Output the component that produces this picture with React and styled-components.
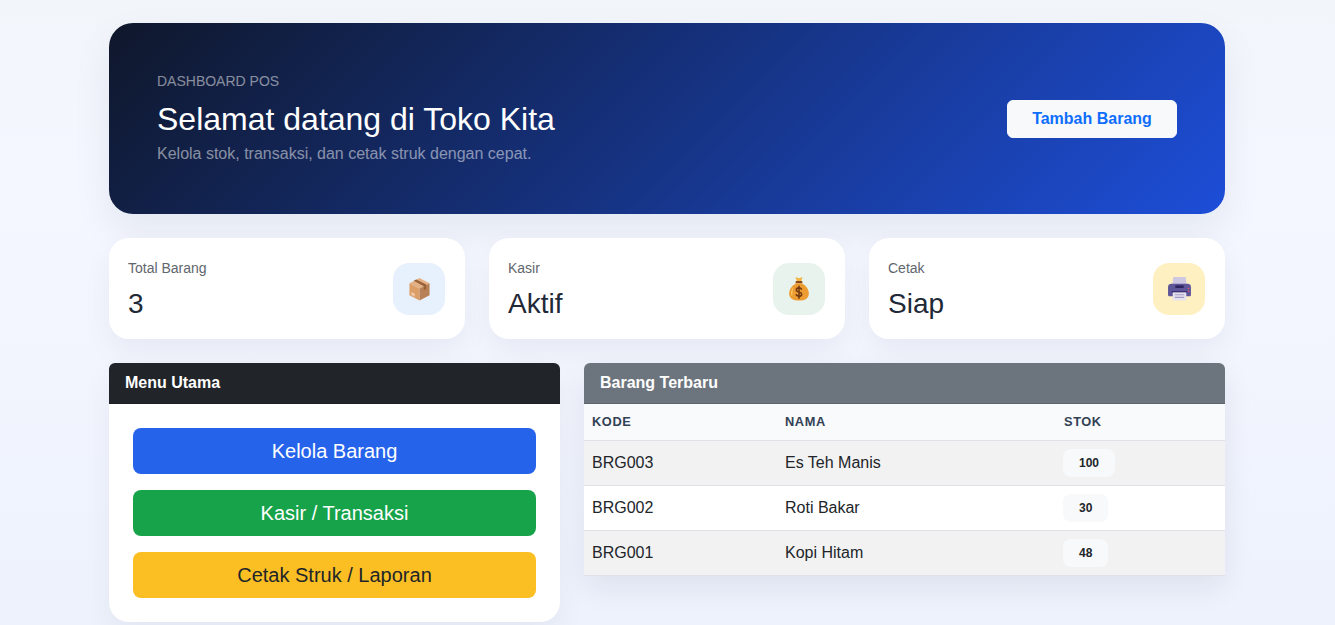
import styled, { createGlobalStyle } from "styled-components";

const GlobalStyle = createGlobalStyle`
  * { box-sizing: border-box; }
  html, body { margin: 0; padding: 0; }
  body {
    font-family: "Liberation Sans", Arial, sans-serif;
    font-size: 16px;
    line-height: 1.5;
    color: #212529;
    background: linear-gradient(180deg, #f2f5fa 0%, #f4f7ff 30%, #eef2fd 100%);
    min-height: 100vh;
  }
`;

const Page = styled.div`
  width: 1116px;
  margin-left: 109px;
  padding-top: 23px;
  display: flex;
  flex-direction: column;
  gap: 24px;
`;

const Hero = styled.section`
  height: 191px;
  padding: 0 48px;
  border-radius: 24px;
  background: linear-gradient(135deg, #0f172a 0%, #1d4ed8 100%);
  box-shadow: 0 16px 40px rgba(15, 23, 42, 0.07);
  display: flex;
  align-items: center;
  justify-content: space-between;
`;

const HeroText = styled.div`
  display: flex;
  flex-direction: column;
`;

const Eyebrow = styled.p`
  margin: 0 0 10px;
  font-size: 14px;
  line-height: 18px;
  color: rgba(255, 255, 255, 0.5);
  text-transform: uppercase;
`;

const Title = styled.h1`
  margin: 0 0 4px;
  font-size: 32px;
  font-weight: 400;
  line-height: 38px;
  color: #fff;
`;

const Subtitle = styled.p`
  margin: 0;
  font-size: 16px;
  line-height: 24px;
  color: rgba(255, 255, 255, 0.5);
`;

const AddButton = styled.button`
  width: 170px;
  height: 38px;
  border: 1px solid #f8f9fa;
  border-radius: 6px;
  background: #f8f9fa;
  color: #0d6efd;
  font: bold 16px "Liberation Sans", Arial, sans-serif;
`;

const StatGrid = styled.section`
  display: grid;
  grid-template-columns: repeat(3, 356px);
  gap: 24px;
`;

const StatCard = styled.div`
  height: 101px;
  padding: 3px 20px 0 19px;
  border-radius: 20px;
  background: #fff;
  box-shadow: 0 12px 30px rgba(15, 23, 42, 0.05);
  display: flex;
  align-items: center;
  justify-content: space-between;
`;

const StatLabel = styled.div`
  font-size: 14px;
  line-height: 18px;
  color: #5f666d;
`;

const StatValue = styled.div`
  font-size: 28px;
  line-height: 34px;
  color: #1f2937;
  margin-top: 10px;
`;

const StatIcon = styled.div`
  width: 52px;
  height: 52px;
  margin-top: -3px;
  border-radius: 16px;
  background: ${(p) => p.$bg};
  display: flex;
  align-items: center;
  justify-content: center;
`;

const Columns = styled.section`
  display: grid;
  grid-template-columns: 451px 641px;
  gap: 24px;
  align-items: start;
`;

const MenuCard = styled.div`
  border-radius: 6px 6px 20px 20px;
  background: #fff;
  box-shadow: 0 12px 30px rgba(15, 23, 42, 0.05);
`;

const ListCard = styled.div`
  border-radius: 6px 6px 0 0;
  background: #fff;
  box-shadow: 0 12px 30px rgba(15, 23, 42, 0.08);
`;

const CardHeader = styled.h2`
  margin: 0;
  height: 41px;
  padding: 0 16px;
  border-radius: 6px 6px 0 0;
  border-bottom: 1px solid rgba(0, 0, 0, 0.13);
  background: ${(p) => p.$bg};
  color: #fff;
  font-size: 16px;
  font-weight: bold;
  line-height: 40px;
`;

const MenuBody = styled.div`
  padding: 24px;
  display: flex;
  flex-direction: column;
  gap: 16px;
`;

const MenuButton = styled.button`
  height: 46px;
  border: 0;
  border-radius: 8px;
  background: ${(p) => p.$bg};
  color: ${(p) => p.$fg};
  font: 20px "Liberation Sans", Arial, sans-serif;
`;

const Table = styled.table`
  width: 100%;
  border-collapse: collapse;
  table-layout: fixed;
`;

const HeadCell = styled.th`
  width: ${(p) => p.$w};
  height: 36px;
  padding: 0 8px;
  background: #f8fafc;
  border-bottom: 1px solid #dee2e6;
  color: #334155;
  font-size: 12.8px;
  font-weight: bold;
  letter-spacing: 0.6px;
  text-align: left;
  text-transform: uppercase;
`;

const Row = styled.tr`
  background: ${(p) => (p.$striped ? "#f2f2f2" : "#fff")};
`;

const Cell = styled.td`
  height: 45px;
  padding: 0 8px;
  border-bottom: 1px solid #dee2e6;
  color: #212529;
`;

const StockBadge = styled.span`
  display: inline-block;
  margin-left: -1px;
  padding: 0 16px;
  height: 28px;
  border-radius: 8px;
  background: #f8f9fa;
  color: #212529;
  font-size: 12px;
  font-weight: bold;
  line-height: 28px;
  vertical-align: middle;
`;

const BoxIcon = () => (
  <svg width="23" height="24" viewBox="0 0 24 25">
    <path d="M12 1 22.500 6.500 12 12 1.500 6.500z" fill="#e3b184" />
    <path d="M1.500 6.500 12 12v12.500L1.500 19z" fill="#dd9f68" />
    <path d="M12 12 22.500 6.500V19L12 24.500z" fill="#b98256" />
    <path d="M6 4 16.500 9.500v4.300l2.500-1.300V7.800L8.500 2.600z" fill="#9a6238" />
    <path d="M3.500 15.500l3.500 1.800v3.200l-3.500-1.800z" fill="#efc9aa" />
  </svg>
);

const MoneyIcon = () => (
  <svg width="22" height="25" viewBox="0 0 24 28">
    <path d="M8 1 12 2.500 16 1l-1.600 5h-4.800z" fill="#f2b544" />
    <path d="M8.600 5.500h6.800l.6 2.500H8z" fill="#8a4b1c" />
    <path d="M9 8C4 10.500 1 15 1 19.500 1 25 5.500 27.500 12 27.500s11-2.500 11-8C23 15 20 10.500 15 8z" fill="#ec9c30" />
    <path d="M6 12c-2 2-3 4.500-3 7 0 1.500.5 3 1.500 4C4.500 19 5 15 6 12z" fill="#f8c15c" />
    <path d="M14.800 14.800c-.6-1-1.700-1.500-2.800-1.500-1.700 0-3 .9-3 2.300 0 3.100 6 1.700 6 4.700 0 1.400-1.400 2.300-3 2.300-1.300 0-2.400-.6-3-1.600M12 11.500v13.500" fill="none" stroke="#6f3810" strokeWidth="1.700" strokeLinecap="round" />
  </svg>
);

const PrinterIcon = () => (
  <svg width="25" height="25" viewBox="0 0 24 24">
    <path d="M6 1h12l1 9H5z" fill="#cdc7e2" />
    <path d="M1 10.500C1 8.500 2.500 7.500 4 7.500h16c1.500 0 3 1 3 3V18c0 1-.7 1.500-1.500 1.500h-19C1.700 19.500 1 19 1 18z" fill="#5f5599" />
    <path d="M8 9h8v2.500H8z" fill="#2e2560" />
    <path d="M5.500 15h13v8.500h-13z" fill="#e6e2ef" />
    <path d="M7.500 18h9M7.500 20.500h9" stroke="#a49cc0" strokeWidth="1" />
    <path d="M4.500 14.500h15v1.200h-15z" fill="#332a6c" />
    <circle cx="20.700" cy="12" r=".8" fill="#e05a6a" />
    <circle cx="20.700" cy="14.700" r=".8" fill="#e05a6a" />
  </svg>
);

const stats = [
  { label: "Total Barang", value: "3", bg: "#e7f0fd", Icon: BoxIcon },
  { label: "Kasir", value: "Aktif", bg: "#e8f3ee", Icon: MoneyIcon },
  { label: "Cetak", value: "Siap", bg: "#fff0c2", Icon: PrinterIcon },
];

const menu = [
  { label: "Kelola Barang", bg: "#2563eb", fg: "#fff" },
  { label: "Kasir / Transaksi", bg: "#16a34a", fg: "#fff" },
  { label: "Cetak Struk / Laporan", bg: "#fbbf24", fg: "#212529" },
];

const items = [
  { kode: "BRG003", nama: "Es Teh Manis", stok: 100 },
  { kode: "BRG002", nama: "Roti Bakar", stok: 30 },
  { kode: "BRG001", nama: "Kopi Hitam", stok: 48 },
];

function App() {
  return (
    <Page>
      <GlobalStyle />
      <Hero>
        <HeroText>
          <Eyebrow>Dashboard POS</Eyebrow>
          <Title>Selamat datang di Toko Kita</Title>
          <Subtitle>Kelola stok, transaksi, dan cetak struk dengan cepat.</Subtitle>
        </HeroText>
        <AddButton>Tambah Barang</AddButton>
      </Hero>

      <StatGrid>
        {stats.map(({ label, value, bg, Icon }) => (
          <StatCard key={label}>
            <div>
              <StatLabel>{label}</StatLabel>
              <StatValue>{value}</StatValue>
            </div>
            <StatIcon $bg={bg}>
              <Icon />
            </StatIcon>
          </StatCard>
        ))}
      </StatGrid>

      <Columns>
        <MenuCard>
          <CardHeader $bg="#212529">Menu Utama</CardHeader>
          <MenuBody>
            {menu.map((m) => (
              <MenuButton key={m.label} $bg={m.bg} $fg={m.fg}>
                {m.label}
              </MenuButton>
            ))}
          </MenuBody>
        </MenuCard>

        <ListCard>
          <CardHeader $bg="#6c757d">Barang Terbaru</CardHeader>
          <Table>
            <thead>
              <tr>
                <HeadCell $w="193px">Kode</HeadCell>
                <HeadCell $w="279px">Nama</HeadCell>
                <HeadCell>Stok</HeadCell>
              </tr>
            </thead>
            <tbody>
              {items.map((item, i) => (
                <Row key={item.kode} $striped={i % 2 === 0}>
                  <Cell>{item.kode}</Cell>
                  <Cell>{item.nama}</Cell>
                  <Cell>
                    <StockBadge>{item.stok}</StockBadge>
                  </Cell>
                </Row>
              ))}
            </tbody>
          </Table>
        </ListCard>
      </Columns>
    </Page>
  );
}

export default App;
